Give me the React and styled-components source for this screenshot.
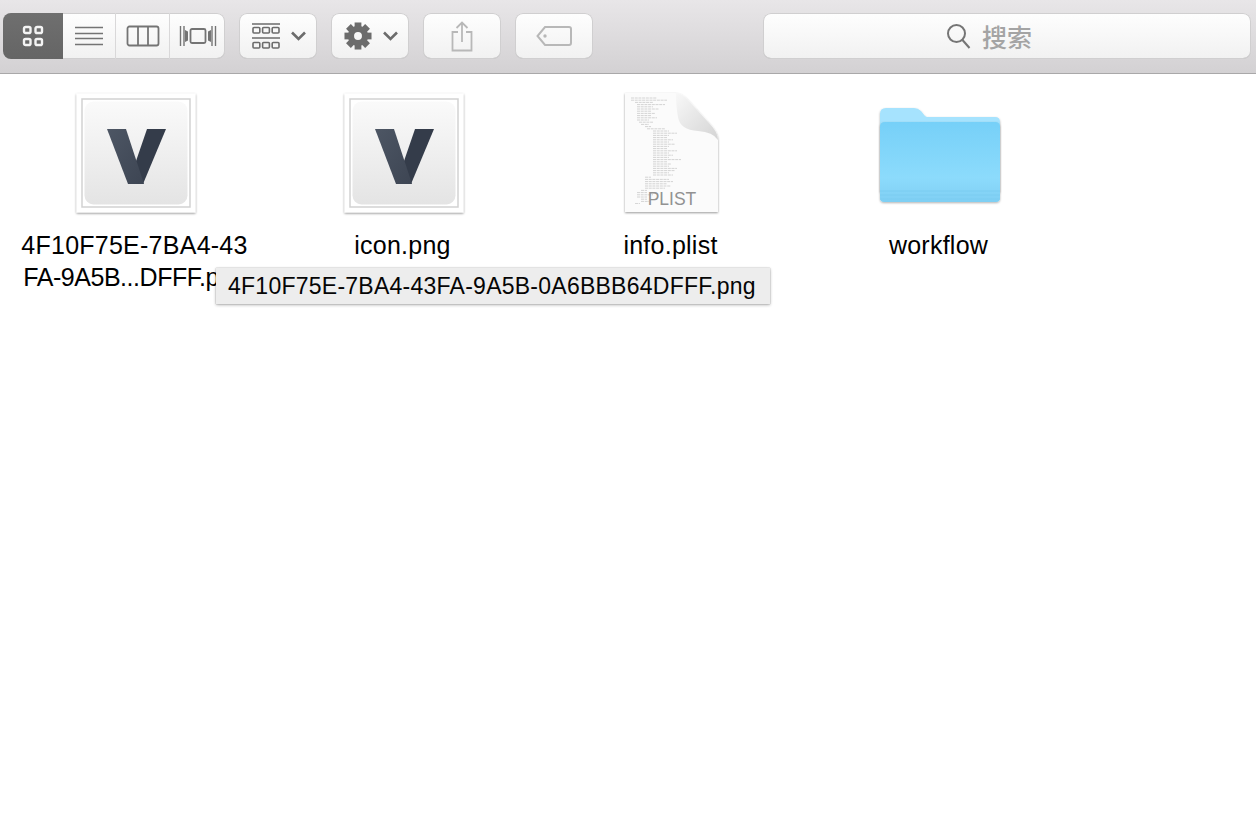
import React from 'react';
import styled, { createGlobalStyle } from 'styled-components';

const GlobalStyle = createGlobalStyle`
  html, body {
    margin: 0;
    padding: 0;
    height: 100%;
    background: #fff;
    font-family: "Liberation Sans", Arial, "Noto Sans CJK SC", sans-serif;
  }
`;

const Page = styled.div`
  position: relative;
  width: 1256px;
  height: 826px;
  overflow: hidden;
  background: #fff;
`;

const Toolbar = styled.div`
  box-sizing: border-box;
  height: 74px;
  padding: 13px 5px 0 3px;
  display: flex;
  align-items: flex-start;
  gap: 14px;
  background: linear-gradient(#e8e6e8, #d3d1d3);
  border-bottom: 1px solid #a9a8a9;
`;

const Segmented = styled.div`
  display: flex;
  height: 46px;
  width: 222px;
  border-radius: 8px;
  overflow: hidden;
  background: linear-gradient(#fefefe, #f1f1f1);
  box-shadow: inset 0 0 0 1px #d0cfd0, inset 0 -1px 0 #b9b8b9;
`;

const Segment = styled.div`
  box-sizing: border-box;
  width: ${(p) => p.$w}px;
  display: flex;
  align-items: center;
  justify-content: center;
  background: ${(p) => (p.$active ? 'linear-gradient(#6f6f6f, #656565)' : 'transparent')};
  border-right: ${(p) => (p.$divider ? '1px solid #d9d8d9' : 'none')};
  color: ${(p) => (p.$active ? '#f4f4f4' : '#747474')};
`;

const ToolButton = styled.div`
  box-sizing: border-box;
  width: 78px;
  height: 46px;
  padding-left: ${(p) => (p.$gap ? 2 : 0)}px;
  display: flex;
  align-items: center;
  justify-content: center;
  gap: ${(p) => p.$gap || 0}px;
  border-radius: 8px;
  background: linear-gradient(#fefefe, #f1f1f1);
  box-shadow: inset 0 0 0 1px #d0cfd0, inset 0 -1px 0 #b9b8b9;
  color: ${(p) => (p.$dim ? '#b8b8b8' : '#6c6c6c')};
`;

const SearchBox = styled(ToolButton)`
  width: 488px;
  margin-left: 156px;
  gap: 11px;
  padding: 0 36px 0 0;
  color: #757575;
`;

const SearchText = styled.span`
  font-size: 25px;
  font-weight: 500;
  color: #a4a4a4;
  font-family: "Noto Sans CJK SC", sans-serif;
`;

const IconGrid = styled.div`
  display: grid;
  grid-template-columns: repeat(4, 268px);
  padding: 19px 0 0 2px;
`;

const Item = styled.div`
  display: flex;
  flex-direction: column;
  align-items: center;
`;

const Thumb = styled.div`
  width: 120px;
  height: 120px;
  display: flex;
  align-items: ${(p) => (p.$bottom ? 'flex-end' : 'center')};
  justify-content: center;
  padding-bottom: ${(p) => (p.$bottom ? 10 : 0)}px;
  box-sizing: border-box;

  svg {
    overflow: visible;
  }
`;

const Label = styled.div`
  width: 240px;
  margin: 16px 3px 0 0;
  font-size: 25px;
  line-height: 32px;
  color: #000;
  text-align: center;
  white-space: pre;
`;

const LabelLine = styled.div`
  letter-spacing: ${(p) => (p.$tight ? -0.45 : 0.25)}px;
`;

const Tooltip = styled.div`
  position: absolute;
  left: 216px;
  top: 268px;
  box-sizing: border-box;
  width: 554px;
  height: 36px;
  padding-left: 12px;
  display: flex;
  align-items: center;
  font-size: 23px;
  letter-spacing: 0.25px;
  color: #050505;
  background: #ededed;
  box-shadow: 0 0 1px rgba(0, 0, 0, 0.35), 0 1px 3px rgba(0, 0, 0, 0.3);
`;

const Chevron = () => (
  <svg width="15" height="10" viewBox="0 0 15 10" fill="none" stroke="currentColor" strokeWidth="2.6">
    <path d="M1 1.500l6.500 6.500 6.500-6.500" />
  </svg>
);

const GridViewIcon = () => (
  <svg width="22" height="22" viewBox="0 0 22 22" fill="none" stroke="currentColor" strokeWidth="2.4">
    <rect x="2" y="2" width="6.500" height="6" rx="1.600" />
    <rect x="13.500" y="2" width="6.500" height="6" rx="1.600" />
    <rect x="2" y="14" width="6.500" height="6" rx="1.600" />
    <rect x="13.500" y="14" width="6.500" height="6" rx="1.600" />
  </svg>
);

const ListViewIcon = () => (
  <svg width="30" height="22" viewBox="0 0 30 22" fill="none" stroke="currentColor" strokeWidth="1.300">
    <path d="M1 2.500h28M1 8.500h28M1 13.500h28M1 19.500h28" />
  </svg>
);

const ColumnViewIcon = () => (
  <svg width="34" height="22" viewBox="0 0 34 22" fill="none" stroke="currentColor" strokeWidth="1.800">
    <rect x="1.500" y="1.500" width="31" height="19" rx="2" />
    <path d="M12 1.500v19M22 1.500v19" />
  </svg>
);

const CoverViewIcon = () => (
  <svg width="38" height="22" viewBox="0 0 38 22" fill="none" stroke="currentColor" strokeWidth="1.400">
    <path d="M1.500 1v20M5 1v20M36.500 1v20M33 1v20" />
    <path d="M6 5l3 1.500v9L6 17zM32 5l-3 1.500v9l3 1.500z" fill="currentColor" stroke="none" />
    <rect x="11.500" y="4" width="15" height="14" rx="1.500" strokeWidth="1.800" />
  </svg>
);

const ArrangeIcon = () => (
  <svg width="28" height="27" viewBox="0 0 28 27" fill="none" stroke="currentColor">
    <path d="M0 1h28M0 15h28" strokeWidth="1.600" />
    <g strokeWidth="1.600">
      <rect x="1" y="4.500" width="6.800" height="5.500" rx="1" />
      <rect x="10.600" y="4.500" width="6.800" height="5.500" rx="1" />
      <rect x="20.200" y="4.500" width="6.800" height="5.500" rx="1" />
      <rect x="1" y="19.500" width="6.800" height="5.500" rx="1" />
      <rect x="10.600" y="19.500" width="6.800" height="5.500" rx="1" />
      <rect x="20.200" y="19.500" width="6.800" height="5.500" rx="1" />
    </g>
  </svg>
);

const GearIcon = () => (
  <svg width="28" height="28" viewBox="0 0 29 29">
    <g fill="currentColor">
      {[0, 45, 90, 135, 180, 225, 270, 315].map((a) => (
        <rect key={a} x="11" y="0.500" width="7" height="6" transform={`rotate(${a} 14.500 14.500)`} />
      ))}
    </g>
    <circle cx="14.500" cy="14.500" r="7.300" fill="none" stroke="currentColor" strokeWidth="6.400" />
  </svg>
);

const ShareIcon = () => (
  <svg width="22" height="31" viewBox="0 0 22 31" fill="none" stroke="currentColor" strokeWidth="1.800">
    <path d="M7 11H1.500v18.500h19V11H15" />
    <path d="M11 21V2M5.500 7L11 1.500 16.500 7" />
  </svg>
);

const TagIcon = () => (
  <svg width="36" height="22" viewBox="0 0 36 22" fill="none" stroke="currentColor" strokeWidth="2">
    <path d="M9 2h24a2 2 0 0 1 2 2v14a2 2 0 0 1-2 2H9L1.500 11z" />
    <circle cx="9" cy="11" r="1.700" fill="currentColor" stroke="none" />
  </svg>
);

const SearchIcon = () => (
  <svg width="25" height="26" viewBox="0 0 25 26" fill="none" stroke="currentColor" strokeWidth="2">
    <circle cx="10.500" cy="10.500" r="8.500" />
    <path d="M16.500 17l7 8" />
  </svg>
);

const AppIcon = ({ id }) => (
  <svg width="120" height="120" viewBox="0 0 120 120">
    <defs>
      <linearGradient id={`${id}-bg`} x1="0" y1="0" x2="0" y2="1">
        <stop offset="0" stopColor="#fafafa" />
        <stop offset="1" stopColor="#e4e4e4" />
      </linearGradient>
      <linearGradient id={`${id}-v`} x1="0" y1="0" x2="1" y2="1">
        <stop offset="0" stopColor="#4d5664" />
        <stop offset="1" stopColor="#3d4553" />
      </linearGradient>
      <filter id={`${id}-s`} x="-5%" y="-5%" width="110%" height="110%">
        <feDropShadow dx="0" dy="1" stdDeviation="1.200" floodColor="#000" floodOpacity="0.45" />
      </filter>
    </defs>
    <rect x="0.500" y="0.500" width="119" height="119" fill="#fff" filter={`url(#${id}-s)`} />
    <rect x="6" y="6" width="108" height="108" fill="none" stroke="#d2d2d2" strokeWidth="1.500" />
    <rect x="8.500" y="8.500" width="103" height="103" rx="9" fill={`url(#${id}-bg)`} />
    <path d="M71 36h19L67 91H56l3-20z" fill="#343c4a" />
    <path d="M31 36h19l18 55H52z" fill={`url(#${id}-v)`} />
  </svg>
);

// indent and width of the little lines of xml on the document preview
const codeLines = [
  [0, 26], [0, 36], [4, 18], [6, 28], [6, 16], [6, 22], [6, 14], [6, 18], [6, 14], [6, 20],
  [6, 12], [8, 14], [10, 8], [14, 6], [16, 18], [22, 16], [22, 24], [22, 16], [22, 14], [22, 20],
  [22, 16], [22, 22], [22, 16], [22, 14], [22, 24], [22, 16], [22, 20], [22, 16], [22, 28], [22, 14],
  [22, 18], [22, 16], [22, 24], [22, 22], [22, 16], [22, 20], [14, 6], [14, 24], [14, 28], [14, 22],
  [14, 26], [14, 20], [10, 6], [6, 10], [6, 16], [6, 10], [10, 6], [10, 8], [4, 5],
];

const PlistIcon = () => (
  <svg width="120" height="120" viewBox="0 0 120 120">
    <defs>
      <filter id="plist-s" x="-10%" y="-5%" width="120%" height="110%">
        <feDropShadow dx="0" dy="1" stdDeviation="1.200" floodColor="#000" floodOpacity="0.4" />
      </filter>
      <linearGradient id="plist-fold" x1="0" y1="0" x2="1" y2="1">
        <stop offset="0" stopColor="#f8f8f8" />
        <stop offset="1" stopColor="#d4d4d4" />
      </linearGradient>
    </defs>
    <path d="M13 0h50q6 0 12 6l22 24q9 9 9 17v72H13z" fill="#fbfbfb" filter="url(#plist-s)" />
    <path d="M64 0q6 1 11 6l22 24q9 9 9 17-5-8-20-9-18-1-20-14-2-10-2-24z" fill="url(#plist-fold)" />
    <g stroke="#8a8a8a" strokeWidth="0.500" strokeDasharray="3 0.700" opacity="0.7">
      {codeLines.map(([x, w], i) => (
        <line key={i} x1={19 + x} x2={19 + x + w} y1={5 + i * 2.200} y2={5 + i * 2.200} />
      ))}
    </g>
    <text x="60" y="112" textAnchor="middle" fontSize="17.500" fill="#929292" fontFamily="Liberation Sans, sans-serif">PLIST</text>
  </svg>
);

const FolderIcon = () => (
  <svg width="120" height="96" viewBox="0 0 120 96">
    <defs>
      <linearGradient id="folder-front" x1="0" y1="0" x2="0" y2="1">
        <stop offset="0" stopColor="#76d0f8" />
        <stop offset="0.700" stopColor="#8cdbfc" />
        <stop offset="1" stopColor="#7fcff3" />
      </linearGradient>
      <filter id="folder-s" x="-5%" y="-5%" width="110%" height="115%">
        <feDropShadow dx="0" dy="1" stdDeviation="1.200" floodColor="#000" floodOpacity="0.3" />
      </filter>
    </defs>
    <path d="M0 7q0-6 6-6h28q4 0 7 3l4 5q1 1 3 1h67q5 0 5 5v70H0z" fill="#a6e3fe" filter="url(#folder-s)" />
    <path d="M0 20q0-5 5-5h110q5 0 5 5v71q0 4-4 4H4q-4 0-4-4z" fill="url(#folder-front)" filter="url(#folder-s)" />
    <path d="M0 84h120M0 88h120M0 92h120" stroke="#7accf1" strokeWidth="1" />
  </svg>
);

const App = () => (
  <Page>
    <GlobalStyle />
    <Toolbar>
      <Segmented>
        <Segment $w={60} $active><GridViewIcon /></Segment>
        <Segment $w={53} $divider><ListViewIcon /></Segment>
        <Segment $w={54} $divider><ColumnViewIcon /></Segment>
        <Segment $w={55}><CoverViewIcon /></Segment>
      </Segmented>
      <ToolButton $gap={11}><ArrangeIcon /><Chevron /></ToolButton>
      <ToolButton $gap={11}><GearIcon /><Chevron /></ToolButton>
      <ToolButton $dim><ShareIcon /></ToolButton>
      <ToolButton $dim><TagIcon /></ToolButton>
      <SearchBox><SearchIcon /><SearchText>搜索</SearchText></SearchBox>
    </Toolbar>
    <IconGrid>
      <Item>
        <Thumb><AppIcon id="uuid" /></Thumb>
        <Label>
          <LabelLine>4F10F75E-7BA4-43</LabelLine>
          <LabelLine $tight>FA-9A5B...DFFF.png</LabelLine>
        </Label>
      </Item>
      <Item>
        <Thumb><AppIcon id="icon" /></Thumb>
        <Label><LabelLine>icon.png</LabelLine></Label>
      </Item>
      <Item>
        <Thumb><PlistIcon /></Thumb>
        <Label><LabelLine>info.plist</LabelLine></Label>
      </Item>
      <Item>
        <Thumb $bottom><FolderIcon /></Thumb>
        <Label><LabelLine>workflow</LabelLine></Label>
      </Item>
    </IconGrid>
    <Tooltip>4F10F75E-7BA4-43FA-9A5B-0A6BBB64DFFF.png</Tooltip>
  </Page>
);

export default App;
